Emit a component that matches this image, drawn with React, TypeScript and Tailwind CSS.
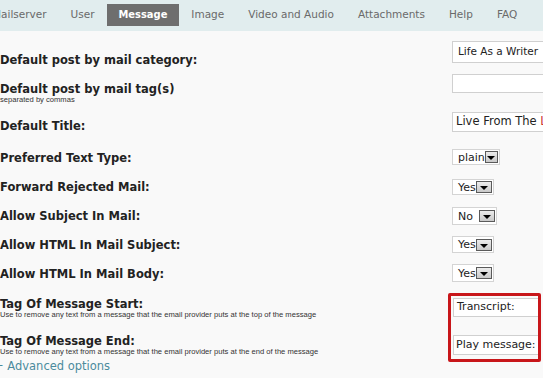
import React from 'react'

const navItems = ['Mailserver', 'User', 'Message', 'Image', 'Video and Audio', 'Attachments', 'Help', 'FAQ']

interface SelectProps {
  value: string
  width: string
  height: string
  mt: string
}

function FakeSelect({ value, width, height, mt }: SelectProps) {
  return (
    <div className={`flex items-center bg-white border border-[#d4d4d4] pl-[5px] ${width} ${height} ${mt}`}>
      <span className="text-[11px] text-[#222] leading-none">{value}</span>
      <span className="ml-auto mr-[1px] flex items-end justify-center w-[16px] h-[12px] border border-[#5a5a5a] bg-gradient-to-b from-[#ececec] to-[#c9c9c9] pb-[2px]">
        <span className="block w-0 h-0 border-l-[4px] border-r-[4px] border-t-[4px] border-l-transparent border-r-transparent border-t-black" />
      </span>
    </div>
  )
}

function Label({ text, help, mt }: { text: string; help?: string; mt: string }) {
  return (
    <div className={`w-[452px] shrink-0 ${mt}`}>
      <div className="text-[11.5px] font-bold text-[#222] leading-[14px]">{text}</div>
      {help && <div className="text-[7.6px] text-[#333] leading-[8px] font-['Liberation_Sans',sans-serif]">{help}</div>}
    </div>
  )
}

export default function App() {
  const selects = [
    { label: 'Preferred Text Type:', value: 'plain', width: 'w-[48px]', height: 'h-[16px]', mt: 'mt-[5px]' },
    { label: 'Forward Rejected Mail:', value: 'Yes', width: 'w-[42px]', height: 'h-[16px]', mt: 'mt-[6px]' },
    { label: 'Allow Subject In Mail:', value: 'No', width: 'w-[45px]', height: 'h-[18px]', mt: 'mt-[5px]' },
    { label: 'Allow HTML In Mail Subject:', value: 'Yes', width: 'w-[42px]', height: 'h-[17px]', mt: 'mt-[5px]' },
    { label: 'Allow HTML In Mail Body:', value: 'Yes', width: 'w-[42px]', height: 'h-[18px]', mt: 'mt-[4px]' },
  ]

  return (
    <div className="w-[543px] h-[378px] overflow-hidden bg-[#f9f9f9] font-['DejaVu_Sans',Verdana,sans-serif]">
      <nav className="h-[31px] bg-[#e1edee] flex items-start">
        <ul className="flex ml-[-20px] mt-[4px] whitespace-nowrap">
          {navItems.map((item) => (
            <li
              key={item}
              className={
                item === 'Message'
                  ? "h-[22px] px-3 flex items-center bg-[#6e6e6e] text-white font-bold text-[11px] font-['DejaVu_Sans_Condensed',sans-serif]"
                  : 'h-[22px] px-3 flex items-center text-[#6a6a6a] text-[10.5px]'
              }
            >
              {item}
            </li>
          ))}
        </ul>
      </nav>

      <div className="pt-[7px]">
        <div className="flex h-[34px]">
          <Label text="Default post by mail category:" mt="mt-[15px]" />
          <div className="mt-[3px] h-[22px] w-[120px] shrink-0 bg-white border border-[#d0d0d0] flex items-center pl-[5px] text-[10.5px] text-[#222] whitespace-nowrap">
            Life As a Writer
          </div>
        </div>
        <div className="flex h-[36px]">
          <Label text="Default post by mail tag(s)" help="separated by commas" mt="mt-[10px]" />
          <div className="mt-[2px] h-[19px] w-[120px] shrink-0 bg-white border border-[#d0d0d0]" />
        </div>
        <div className="flex h-[36px]">
          <Label text="Default Title:" mt="mt-[11px]" />
          <div className="mt-[4px] h-[20px] w-[120px] shrink-0 bg-white border border-[#d0d0d0] flex items-center pl-[3px] text-[11.5px] text-[#222] whitespace-pre overflow-hidden">
            <span>Live From The </span>
            <span className="text-[#c33]">L</span>
          </div>
        </div>
        {selects.map((s) => (
          <div key={s.label} className="flex h-[29px]">
            <Label text={s.label} mt="mt-[7px]" />
            <FakeSelect value={s.value} width={s.width} height={s.height} mt={s.mt} />
          </div>
        ))}
        <div className="flex h-[69px]">
          <div className="w-[448px] shrink-0">
            <Label
              text="Tag Of Message Start:"
              help="Use to remove any text from a message that the email provider puts at the top of the message"
              mt="mt-[8px]"
            />
            <Label
              text="Tag Of Message End:"
              help="Use to remove any text from a message that the email provider puts at the end of the message"
              mt="mt-[15px]"
            />
          </div>
          <div className="mt-[4px] h-[69px] w-[93px] shrink-0 border-[3px] border-[#c8161a] rounded-[2px] overflow-hidden pl-[2px] pt-[2px]">
            <div className="h-[19px] w-[120px] bg-white border border-[#d0d0d0] flex items-center pl-[3px] text-[11px] text-[#222] whitespace-nowrap">
              Transcript:
            </div>
            <div className="mt-[18px] h-[20px] w-[120px] bg-white border border-[#d0d0d0] flex items-center pl-[2px] text-[11px] text-[#222] whitespace-nowrap">
              Play message:
            </div>
          </div>
        </div>
        <div className="ml-[-6px] mt-[1px] text-[11.5px] text-[#4b8b9d] leading-[14px] whitespace-nowrap">
          + Advanced options
        </div>
      </div>
    </div>
  )
}
